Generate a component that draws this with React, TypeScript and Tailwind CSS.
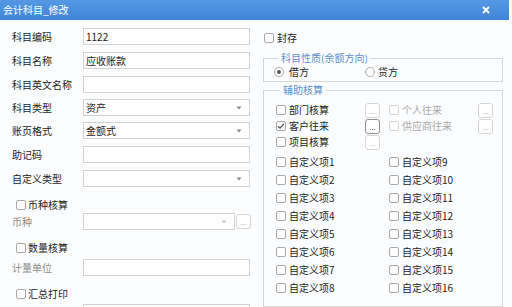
import React from "react";

const FONT = { fontFamily: '"Noto Sans CJK SC", "Noto Sans", sans-serif' };

function Check({ checked = false, disabled = false }: { checked?: boolean; disabled?: boolean }) {
  return (
    <span
      className={`w-[10px] h-[10px] shrink-0 rounded-[2px] border bg-white flex items-center justify-center ${
        disabled ? "border-[#d4d4d4]" : "border-[#a8a8a8]"
      }`}
    >
      {checked && (
        <svg width="8" height="8" viewBox="0 0 8 8">
          <path d="M1 4.2 L3 6.2 L7 1.6" fill="none" stroke="#444" strokeWidth="1.1" />
        </svg>
      )}
    </span>
  );
}

function Radio({ checked = false }: { checked?: boolean }) {
  return (
    <span className="w-[10px] h-[10px] shrink-0 rounded-full border border-[#a8a8a8] bg-white flex items-center justify-center">
      {checked && <span className="w-[4px] h-[4px] rounded-full bg-[#555]" />}
    </span>
  );
}

function Dots({ enabled = false }: { enabled?: boolean }) {
  return (
    <span
      className={`w-[15px] h-[15px] shrink-0 rounded-[3px] border bg-white flex items-end justify-center pb-[2px] text-[7px] leading-[7px] ${
        enabled ? "border-[#8f8f8f] text-[#333]" : "border-[#d6d6d6] text-[#b0b0b0]"
      }`}
    >
      ...
    </span>
  );
}

function Input({ value = "", select = false, w = "w-[167px]", disabled = false }: { value?: string; select?: boolean; w?: string; disabled?: boolean }) {
  return (
    <div
      className={`${w} h-[17px] border border-[#d2d2d2] bg-white flex items-center pl-[2px] pr-[7px] text-[10px] text-[#222]`}
    >
      <span className="flex-1">{value}</span>
      {select && (
        <svg width="6" height="4" viewBox="0 0 6 4">
          <path d="M0.5 0.5 L3 3.5 L5.5 0.5 Z" fill={disabled ? "#c4c4c4" : "#8a8a8a"} />
        </svg>
      )}
    </div>
  );
}

function Row({ label, children, mt, grey = false }: { label: string; children: React.ReactNode; mt: string; grey?: boolean }) {
  return (
    <div className={`flex items-center ${mt}`}>
      <span className={`w-[71px] text-[10px] leading-[12px] ${grey ? "text-[#8a8a8a]" : "text-[#222]"}`}>{label}</span>
      {children}
    </div>
  );
}

function CheckRow({ label, mt, checked = false }: { label: string; mt: string; checked?: boolean }) {
  return (
    <div className={`flex items-center h-[12px] gap-[2px] pl-[4px] ${mt}`}>
      <Check checked={checked} />
      <span className="text-[10px] leading-[12px] text-[#222]">{label}</span>
    </div>
  );
}

function Item({ label, checked = false, disabled = false }: { label: string; checked?: boolean; disabled?: boolean }) {
  return (
    <div className="flex items-center gap-[3px]">
      <Check checked={checked} disabled={disabled} />
      <span className={`text-[10px] leading-[12px] ${disabled ? "text-[#a8a8a8]" : "text-[#222]"}`}>{label}</span>
    </div>
  );
}

export default function App() {
  const custom = [1, 2, 3, 4, 5, 6, 7, 8];
  return (
    <div className="w-[512px] h-[307px] overflow-hidden bg-[#fcfdfe]" style={FONT}>
      <div className="h-[20px] w-[509px] bg-gradient-to-b from-[#5598e4] to-[#4185d8] flex items-center justify-between pl-[3px] pr-[19px]">
        <span className="text-white text-[10px] leading-[12px]">会计科目_修改</span>
        <svg width="8" height="8" viewBox="0 0 8 8">
          <path d="M1 1 L7 7 M7 1 L1 7" stroke="#fff" strokeWidth="1.8" />
        </svg>
      </div>
      <div className="flex">
        {/* left column */}
        <div className="w-[263px] pl-[12px] flex flex-col">
          <Row label="科目编码" mt="mt-[8px]"><Input value="1122" /></Row>
          <Row label="科目名称" mt="mt-[7px]"><Input value="应收账款" /></Row>
          <Row label="科目英文名称" mt="mt-[7px]"><Input /></Row>
          <Row label="科目类型" mt="mt-[6px]"><Input value="资产" select /></Row>
          <Row label="账页格式" mt="mt-[6px]"><Input value="金额式" select /></Row>
          <Row label="助记码" mt="mt-[7px]"><Input /></Row>
          <Row label="自定义类型" mt="mt-[7px]"><Input select /></Row>
          <CheckRow label="币种核算" mt="mt-[12px]" />
          <Row label="币种" mt="mt-[2px]" grey>
            <div className="flex items-center gap-[1px]">
              <Input select disabled w="w-[152px]" />
              <Dots />
            </div>
          </Row>
          <CheckRow label="数量核算" mt="mt-[12px]" />
          <Row label="计量单位" mt="mt-[5px]" grey><Input /></Row>
          <CheckRow label="汇总打印" mt="mt-[12px]" />
          <Row label="" mt="mt-[4px]"><Input /></Row>
        </div>
        {/* right column */}
        <div className="w-[240px] flex flex-col">
          <div className="flex items-center gap-[3px] h-[12px] mt-[12px] pl-[1px]">
            <Check />
            <span className="text-[10px] leading-[12px] text-[#222]">封存</span>
          </div>
          <fieldset className="mt-[8px] border border-[#d6d6d6] pl-[10px] pb-[2px]">
            <legend className="ml-[4px] px-[3px] text-[10px] leading-[12px] text-[#5d8fd0]">科目性质(余额方向)</legend>
            <div className="flex items-center h-[14px] mt-[1px]">
              <div className="flex items-center gap-[5px] w-[91px]">
                <Radio checked />
                <span className="text-[10px] leading-[12px] text-[#222]">借方</span>
              </div>
              <div className="flex items-center gap-[3px]">
                <Radio />
                <span className="text-[10px] leading-[12px] text-[#222]">贷方</span>
              </div>
            </div>
          </fieldset>
          <fieldset className="mt-[2px] border border-[#d6d6d6] pl-[12px] h-[223px]">
            <legend className="ml-[4px] px-[3px] text-[10px] leading-[12px] text-[#5d8fd0]">辅助核算</legend>
            <div className="grid grid-cols-[113px_113px] mt-[6px]">
              <div className="flex items-center h-[16px]">
                <div className="w-[89px]"><Item label="部门核算" /></div>
                <Dots />
              </div>
              <div className="flex items-center h-[16px]">
                <div className="w-[89px]"><Item label="个人往来" disabled /></div>
                <Dots />
              </div>
              <div className="flex items-center h-[16px]">
                <div className="w-[89px]"><Item label="客户往来" checked /></div>
                <Dots enabled />
              </div>
              <div className="flex items-center h-[16px]">
                <div className="w-[89px]"><Item label="供应商往来" disabled /></div>
                <Dots />
              </div>
              <div className="flex items-center h-[16px]">
                <div className="w-[89px]"><Item label="项目核算" /></div>
                <Dots />
              </div>
              <div />
            </div>
            <div className="grid grid-cols-[113px_113px] mt-[3px]">
              {custom.map((n) => (
                <React.Fragment key={n}>
                  <div className="h-[18px] flex items-center"><Item label={`自定义项${n}`} /></div>
                  <div className="h-[18px] flex items-center"><Item label={`自定义项${n + 8}`} /></div>
                </React.Fragment>
              ))}
            </div>
          </fieldset>
        </div>
      </div>
    </div>
  );
}
